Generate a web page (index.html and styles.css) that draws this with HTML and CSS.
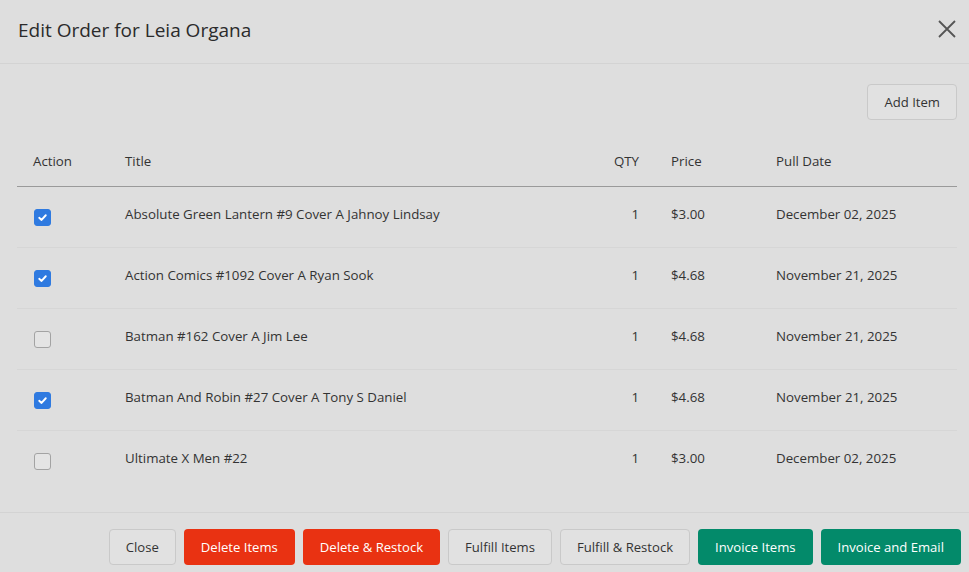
FILE: index.html
```html
<!DOCTYPE html>
<html lang="en">

<head>
    <meta charset="UTF-8">
    <meta name="viewport" content="width=device-width, initial-scale=1.0">
    <title>Edit Order</title>
    <link rel="stylesheet" href="styles.css">
</head>

<body>
    <div class="modal">
        <div class="modal-header">
            <h1>Edit Order for Leia Organa</h1>
            <button class="close-x" aria-label="Close">
                <svg width="18" height="18" viewBox="0 0 18 18">
                    <path d="M1 1 L17 17 M17 1 L1 17" stroke="#555" stroke-width="1.8" fill="none" />
                </svg>
            </button>
        </div>

        <div class="modal-body">
            <div class="toolbar">
                <button class="btn btn-light">Add Item</button>
            </div>
            <table class="items">
                <thead>
                    <tr>
                        <th class="col-action">Action</th>
                        <th class="col-title">Title</th>
                        <th class="col-qty">QTY</th>
                        <th class="col-price">Price</th>
                        <th class="col-date">Pull Date</th>
                    </tr>
                </thead>
                <tbody>
                    <tr>
                        <td><span class="check checked"></span></td>
                        <td>Absolute Green Lantern #9 Cover A Jahnoy Lindsay</td>
                        <td class="col-qty">1</td>
                        <td>$3.00</td>
                        <td>December 02, 2025</td>
                    </tr>
                    <tr>
                        <td><span class="check checked"></span></td>
                        <td>Action Comics #1092 Cover A Ryan Sook</td>
                        <td class="col-qty">1</td>
                        <td>$4.68</td>
                        <td>November 21, 2025</td>
                    </tr>
                    <tr>
                        <td><span class="check"></span></td>
                        <td>Batman #162 Cover A Jim Lee</td>
                        <td class="col-qty">1</td>
                        <td>$4.68</td>
                        <td>November 21, 2025</td>
                    </tr>
                    <tr>
                        <td><span class="check checked"></span></td>
                        <td>Batman And Robin #27 Cover A Tony S Daniel</td>
                        <td class="col-qty">1</td>
                        <td>$4.68</td>
                        <td>November 21, 2025</td>
                    </tr>
                    <tr>
                        <td><span class="check"></span></td>
                        <td>Ultimate X Men #22</td>
                        <td class="col-qty">1</td>
                        <td>$3.00</td>
                        <td>December 02, 2025</td>
                    </tr>
                </tbody>
            </table>
        </div>

        <div class="modal-footer">
            <button class="btn btn-light">Close</button>
            <button class="btn btn-red">Delete Items</button>
            <button class="btn btn-red">Delete &amp; Restock</button>
            <button class="btn btn-light">Fulfill Items</button>
            <button class="btn btn-light">Fulfill &amp; Restock</button>
            <button class="btn btn-green">Invoice Items</button>
            <button class="btn btn-green">Invoice and Email</button>
        </div>
    </div>
</body>

</html>
```

FILE: styles.css
```css
body {
    margin: 0;
    font-family: "Open Sans", "Noto Sans", sans-serif;
    background-color: #dedede;
    color: #333;
    overflow: hidden;
}

.modal {
    width: 969px;
}

.modal-header {
    display: flex;
    align-items: center;
    justify-content: space-between;
    height: 63px;
    padding: 0 13px 0 18px;
    border-bottom: 1px solid #d3d3d3;
}

.modal-header h1 {
    margin: 0 0 3px;
    font-size: 19px;
    font-weight: 400;
    color: #2b2b2b;
}

.close-x {
    background: none;
    border: none;
    padding: 0;
    margin-bottom: 3px;
    cursor: pointer;
}

.modal-body {
    padding: 20px 12px 21px 17px;
}

.toolbar {
    display: flex;
    justify-content: flex-end;
    margin-bottom: 20px;
}

.btn {
    height: 36px;
    padding: 0 16px;
    font-family: inherit;
    font-size: 13.1px;
    border-radius: 4px;
    border: 1px solid transparent;
    cursor: pointer;
}

.btn-light {
    background-color: #e1e1e1;
    border-color: #c9c9c9;
    color: #333;
}

.btn-red {
    background-color: #e93212;
    color: #fff;
}

.btn-green {
    background-color: #038a6a;
    color: #fff;
}

.items {
    width: 100%;
    border-collapse: collapse;
    font-size: 13.3px;
}

.items th {
    font-weight: 400;
    text-align: left;
    padding: 11px 16px 15px;
    line-height: 20px;
    border-bottom: 1px solid #9a9a9a;
}

.items td {
    height: 20px;
    padding: 17px 16px 23px;
    line-height: 20px;
    vertical-align: top;
    border-bottom: 1px solid #d6d6d6;
}

.items tbody tr:last-child td {
    border-bottom: none;
}

.col-action {
    width: 60px;
}

.items .col-qty {
    text-align: right;
}

.col-price {
    width: 73px;
}

.col-date {
    width: 165px;
}

.check {
    display: block;
    box-sizing: border-box;
    width: 17px;
    height: 17px;
    margin: 5px 0 -2px 1px;
    border: 1.5px solid #a3a3a3;
    border-radius: 3px;
    background-color: #e4e4e4;
}

.check.checked {
    border-color: #2f7ae0;
    background-color: #2f7ae0;
    background-image: url("data:image/svg+xml,%3Csvg xmlns='http://www.w3.org/2000/svg' viewBox='0 0 16 16'%3E%3Cpath d='M4.5 8.3 L7 10.6 L11.5 5.6' stroke='%23fff' stroke-width='2' fill='none' stroke-linecap='round' stroke-linejoin='round'/%3E%3C/svg%3E");
    background-size: 100% 100%;
}

.modal-footer {
    display: flex;
    justify-content: flex-end;
    gap: 8px;
    padding: 16px 8px 7px;
    border-top: 1px solid #d3d3d3;
}
```
